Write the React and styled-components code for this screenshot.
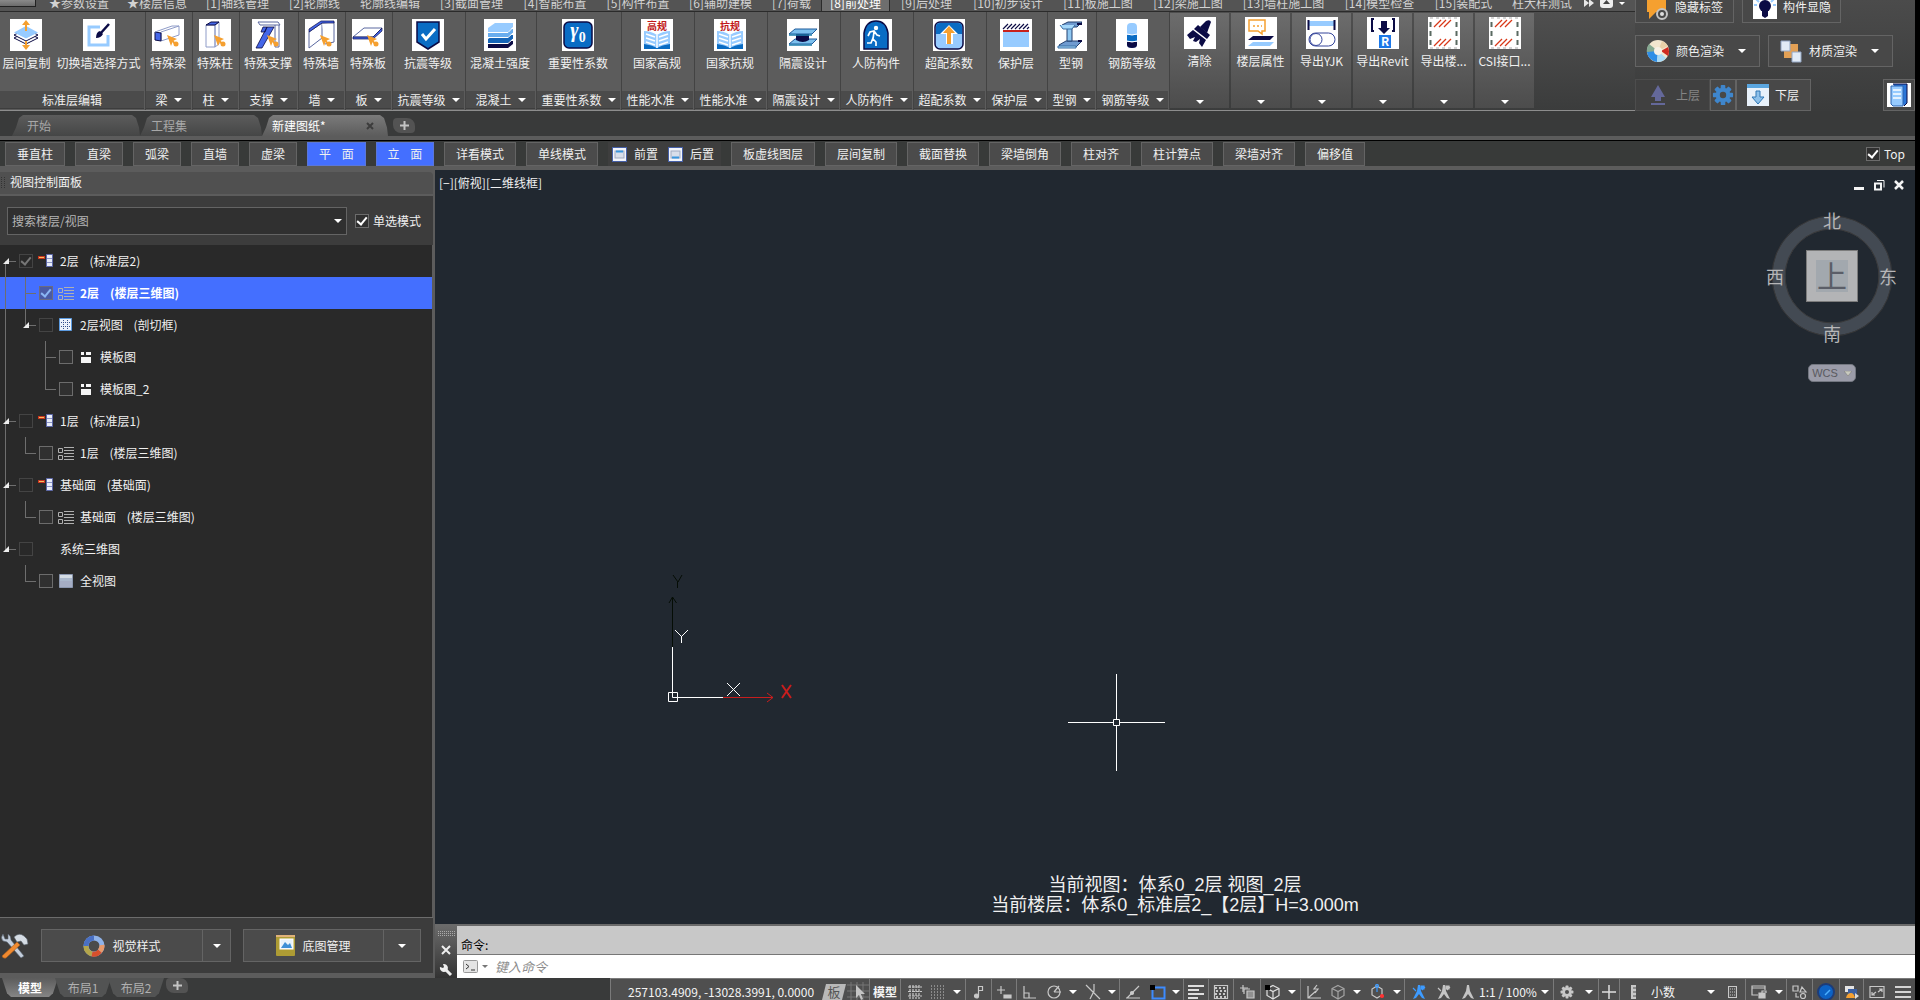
import React from "react";
import styled, { createGlobalStyle, css } from "styled-components";

const GlobalStyle = createGlobalStyle`
  * { box-sizing: border-box; }
  body {
    margin: 0;
    background: #000;
    overflow: hidden;
    color: #f0f0f0;
    font: 12px/16px "Noto Sans CJK SC", sans-serif;
  }
  button, select, input { font: inherit; color: inherit; margin: 0; }
  button { padding: 0; border: 0; background: none; white-space: nowrap; }
  svg { display: block; flex: none; }
`;

/* ---------- shell ---------- */

const Shell = styled.div`
  display: flex;
  flex-direction: column;
  height: 100vh;
  margin-right: 5px;
  background: #5c5c5c;
`;

const TopArea = styled.header`
  display: flex;
  flex: none;
  height: 111px;
`;

const RibbonColumn = styled.div`
  flex: 1;
  min-width: 0;
  display: flex;
  flex-direction: column;
  border-bottom: 1px solid #8d8d8d;
  overflow: hidden;
`;

/* ---------- menu strip ---------- */

const MenuStrip = styled.nav`
  display: flex;
  flex: none;
  align-items: flex-end;
  height: 12px;
  overflow: hidden;
  background: #545454;
  border-bottom: 1px solid #2b2b2b;
`;

const AppCorner = styled.button`
  flex: none;
  align-self: flex-start;
  width: 36px;
  height: 7px;
  margin-right: 4px;
  background: linear-gradient(#8a8a8a, #6c6c6c);
  border-right: 1px solid #222;
  border-bottom: 1px solid #222;
`;

const MenuTab = styled.button`
  flex: none;
  width: ${(p) => p.$w}px;
  height: 16px;
  line-height: 16px;
  text-align: center;
  color: ${(p) => (p.$active ? "#fff" : "#d2d2d2")};
  ${(p) =>
    p.$active &&
    css`
      background: #6e6e6e;
      border-left: 1px solid #2b2b2b;
      border-right: 1px solid #2b2b2b;
    `}
`;

const MenuExtras = styled.div`
  display: flex;
  align-items: center;
  gap: 6px;
  height: 16px;
  margin-left: 2px;
`;

/* ---------- ribbon ---------- */

const Ribbon = styled.div`
  display: flex;
  flex: 1;
  background: linear-gradient(#4f4f4f, #3b3c3c);
`;

const Panel = styled.section`
  flex: none;
  display: flex;
  flex-direction: column;
  width: ${(p) => p.$w}px;
  padding: 7px 0 1px;
  background: #5c5c5c;
  border-right: 1px solid #434343;
`;

const PanelTools = styled.div`
  flex: 1;
  display: flex;
  justify-content: center;
  gap: 6px;
  padding-right: 2px;
`;

const Tool = styled.button`
  display: flex;
  flex-direction: column;
  align-items: center;
  gap: 4px;
  height: 56px;
`;

const PanelTitle = styled.button`
  display: flex;
  align-items: center;
  justify-content: center;
  gap: 6px;
  height: 18px;
  margin-right: 1px;
  background: #4b4b4b;
  border-bottom: 1px solid #3d3d3d;
`;

const Collapsed = styled.button`
  flex: none;
  display: flex;
  flex-direction: column;
  align-items: center;
  gap: 4px;
  width: 59px;
  margin: 1px 2px 2px 0;
  padding: 4px 0 4px;
  background: linear-gradient(#6c6c6c, #4c4c4c);
  overflow: hidden;

  & > svg:last-child { margin-top: auto; }
`;

/* ---------- quick buttons at the right ---------- */

const QuickArea = styled.aside`
  flex: none;
  display: flex;
  flex-direction: column;
  justify-content: flex-end;
  gap: 12px;
  width: 280px;
  overflow: hidden;
  background: linear-gradient(#4b4b4b, #3a3b3b);
`;

const QuickRow = styled.div`
  display: flex;
  flex: none;
  gap: ${(p) => p.$gap || 0}px;
  height: 32px;
`;

const QuickButton = styled.button`
  display: flex;
  align-items: center;
  gap: 6px;
  width: ${(p) => p.$w}px;
  padding: 0 0 0 ${(p) => p.$pad ?? 10}px;
  background: #484848;
  border: 1px solid #646464;
  ${(p) => p.$off && "background: #404040; border-color: #4d4d4d; color: #858585;"}
  ${(p) => p.$last && "margin-left: auto;"}
  & > span { margin-right: 8px; }
`;

/* ---------- document tabs ---------- */

const DocTabs = styled.nav`
  flex: none;
  display: flex;
  align-items: flex-end;
  height: 25px;
  padding-left: 12px;
  background: #393a3a;
`;

const DocTab = styled.button`
  position: relative;
  display: flex;
  align-items: center;
  justify-content: space-between;
  width: ${(p) => p.$w}px;
  height: 21px;
  padding: 0 14px 0 ${(p) => p.$pad}px;
  color: ${(p) => (p.$active ? "#fff" : "#a8a8a8")};
  background: ${(p) => (p.$active ? "linear-gradient(#7b7b7b, #5c5c5c)" : "linear-gradient(#5c5c5c, #454646)")};
  clip-path: polygon(0 100%, 4px 60%, 7px 3px, 11px 0, calc(100% - 8px) 0, calc(100% - 4px) 3px, calc(100% - 1px) 60%, 100% 100%);
`;

const AddTab = styled.button`
  display: grid;
  place-items: center;
  width: 22px;
  height: 15px;
  margin: 0 0 3px 5px;
  background: #535353;
  border-radius: 4px 8px 4px 8px;
`;

/* ---------- command toolbar ---------- */

const Toolbar = styled.div`
  flex: none;
  display: flex;
  align-items: stretch;
  gap: 10px;
  height: 30px;
  margin-top: 4px;
  padding: 1px 10px 0 5px;
  background: #383a39;
  border-top: 1px solid #000;
  border-bottom: 4px solid #5c5c5c;
`;

const ToolbarButton = styled.button`
  flex: none;
  width: ${(p) => p.$w}px;
  background: ${(p) => (p.$on ? "#446fff" : "#4b4b4b")};
  border: 1px solid ${(p) => (p.$on ? "#5b77d8" : "#646464")};
  white-space: pre;
`;

const OrderGroup = styled.div`
  display: flex;
  align-items: center;
  gap: 10px;
  width: 113px;
  padding-left: 4px;
  background: #3e3e3e;
`;

const OrderButton = styled.button`
  display: flex;
  align-items: center;
  gap: 7px;
`;

const CheckLabel = styled.label`
  display: flex;
  align-items: center;
  gap: 4px;
  ${(p) => p.$push && "margin-left: auto;"}
`;

const Check = styled.input.attrs({ type: "checkbox" })`
  appearance: none;
  flex: none;
  display: grid;
  place-items: center;
  width: 14px;
  height: 14px;
  color: ${(p) => (p.$tone === "blue" ? "#8ab6f5" : p.$tone === "dim" ? "#777" : "#fff")};
  border: 1px solid ${(p) => (p.$tone === "blue" ? "#6b6b80" : p.$tone === "dim" ? "#444" : "#6c6c6c")};
  background: ${(p) => (p.$tone === "blue" ? "#4a5aa5" : p.$tone === "dim" ? "#292929" : "#303030")};

  &:checked::after {
    content: "";
    width: 4px;
    height: 8px;
    margin-top: -2px;
    border: solid currentColor;
    border-width: 0 2px 2px 0;
    transform: rotate(40deg);
  }
`;

/* ---------- body ---------- */

const Body = styled.main`
  flex: 1;
  min-height: 0;
  display: flex;
`;

const Side = styled.aside`
  flex: none;
  display: flex;
  flex-direction: column;
  width: 435px;
  padding: 2px 2px 5px 0;
`;

const SideHeader = styled.h2`
  display: flex;
  align-items: center;
  gap: 5px;
  height: 24px;
  margin: 0;
  padding: 0 0 2px 1px;
  font: inherit;
  background: #505050;
  border-bottom: 2px solid #5c5c5c;
  border-radius: 0 4px 0 0;
`;

const SearchRow = styled.div`
  display: flex;
  align-items: center;
  gap: 8px;
  height: 49px;
  padding: 0 12px 0 7px;
  background: #3c3c3c;
`;

const SelectBox = styled.div`
  position: relative;
  flex: ${(p) => (p.$w ? "none" : 1)};
  ${(p) => p.$w && `width: ${p.$w}px;`}
  height: ${(p) => p.$h}px;

  select {
    appearance: none;
    width: 100%;
    height: 100%;
    padding: 0 4px;
    border: ${(p) => (p.$w ? "0" : "1px solid #646464")};
    border-radius: 0;
    background: ${(p) => (p.$w ? "transparent" : "#303030")};
    color: ${(p) => (p.$w ? "#f4f4f4" : "#b4b4b4")};
  }
  svg {
    position: absolute;
    right: 5px;
    top: calc(50% - 2px);
  }
`;

const Tree = styled.ul`
  flex: 1;
  min-height: 0;
  margin: 0 1px 0 0;
  padding: 0;
  list-style: none;
  background: #292929;
`;

const TreeRow = styled.li`
  display: flex;
  align-items: center;
  height: 32px;
  white-space: pre;
  ${(p) => p.$selected && "background: #446fff; color: #fff; font-weight: 700;"}
`;

const Guide = styled.span`
  position: relative;
  flex: none;
  width: ${(p) => (p.$stub ? 19 : 20)}px;
  height: 32px;

  &::before {
    content: "";
    position: absolute;
    left: 5px;
    width: 1px;
    background: #6e6e6e;
    top: ${(p) => (p.$line === "start" ? 16 : 0)}px;
    height: ${(p) => ({ full: 32, start: 16, end: 16 })[p.$line] || 0}px;
  }
  &::after {
    content: "";
    position: absolute;
    left: 5px;
    top: 16px;
    width: ${(p) => (p.$stub ? 11 : 0)}px;
    height: 1px;
    background: #6e6e6e;
  }
  svg {
    position: absolute;
    left: 3px;
    top: 13px;
    z-index: 1;
  }
`;

const TreeIcon = styled.span`
  flex: none;
  display: grid;
  place-items: center start;
  width: 17px;
  margin: 0 5px;
`;

const SideFooter = styled.div`
  display: flex;
  align-items: center;
  gap: 12px;
  height: 56px;
  background: #3c3c3c;
  border-top: 1px solid #6c6c6c;
`;

const SplitButton = styled.div`
  display: flex;
  width: ${(p) => p.$w}px;
  height: 33px;
  background: #4b4b4b;
  border: 1px solid #646464;

  button {
    display: flex;
    align-items: center;
    justify-content: center;
    gap: 7px;
  }
  button:first-child { flex: 1; }
  button:last-child {
    width: ${(p) => p.$arrow}px;
    border-left: 1px solid #646464;
  }
`;

/* ---------- drawing area ---------- */

const Work = styled.div`
  flex: 1;
  min-width: 0;
  display: flex;
  flex-direction: column;
`;

const Canvas = styled.section`
  position: relative;
  flex: 1;
  min-height: 0;
  background: #212830;
  overflow: hidden;
`;

const ViewLabel = styled.div`
  position: absolute;
  left: 4px;
  top: 5px;
`;

const WindowButtons = styled.div`
  position: absolute;
  right: 10px;
  top: 9px;
  display: flex;
  gap: 8px;
`;

const Compass = styled.div`
  position: absolute;
  right: 17px;
  top: 40px;
  display: flex;
  flex-direction: column;
  align-items: center;
  gap: 20px;
`;

const WcsButton = styled.button`
  display: flex;
  align-items: center;
  justify-content: center;
  gap: 6px;
  width: 48px;
  height: 18px;
  border: 1px solid #737780;
  border-radius: 5px;
  background: #9b9ca9;
  color: #5a5a60;
  font: 11px/16px "Liberation Sans", sans-serif;
`;

const Drawing = styled.svg`
  position: absolute;
  left: ${(p) => p.$x}px;
  top: ${(p) => p.$y}px;
`;

const Caption = styled.p`
  position: absolute;
  left: 0;
  right: 0;
  bottom: 9px;
  margin: 0;
  text-align: center;
  font: 18px/20px "Liberation Sans", "Noto Sans CJK SC", sans-serif;
`;

const CommandDock = styled.section`
  flex: none;
  display: flex;
  height: 54px;
  border-top: 2px solid #6a6a6a;
`;

const DockHandle = styled.div`
  display: flex;
  flex-direction: column;
  align-items: center;
  justify-content: space-between;
  width: 22px;
  padding: 5px 0 1px;
  background: linear-gradient(#6a6a6a, #333);
`;

const DockBody = styled.div`
  flex: 1;
  display: flex;
  flex-direction: column;
  background: #fff;
`;

const History = styled.div`
  height: 29px;
  padding: 10px 0 0 4px;
  background: #c8c8c8;
  border-bottom: 1px solid #777;
  color: #000;
  line-height: 18px;
`;

const Prompt = styled.div`
  flex: 1;
  display: flex;
  align-items: center;
  gap: 4px;
  padding-left: 6px;

  input {
    flex: 1;
    height: 18px;
    margin-left: 3px;
    padding: 0;
    border: 0;
    outline: 0;
    background: none;
  }
  input::placeholder {
    color: #8c8c8c;
    font-style: italic;
    font-size: 13px;
    opacity: 1;
  }
`;

/* ---------- bottom line ---------- */

const BottomLine = styled.footer`
  flex: none;
  display: flex;
  justify-content: space-between;
  height: 22px;
  overflow: hidden;
  background: #393a3a;
`;

const LayoutTabs = styled.nav`
  display: flex;
  padding-left: 2px;
`;

const LayoutTab = styled.button`
  width: 56px;
  height: 19px;
  margin-right: -3px;
  color: ${(p) => (p.$active ? "#fff" : "#b0b0b0")};
  font-weight: ${(p) => (p.$active ? 700 : 400)};
  background: ${(p) => (p.$active ? "linear-gradient(#5c5c5c, #858585)" : "#525353")};
  clip-path: polygon(0 0, 100% 0, calc(100% - 5px) 80%, calc(100% - 9px) 100%, 9px 100%, 5px 80%);
`;

const Status = styled.div`
  display: flex;
  height: 26px;
  background: #4f4f4f;
  border-top: 1px solid #7a7a7a;
  border-left: 1px solid #7a7a7a;
`;

const Cell = styled.button`
  flex: none;
  display: flex;
  align-items: center;
  justify-content: ${(p) => (p.$start ? "flex-start" : "center")};
  width: ${(p) => p.$w}px;
  padding-left: ${(p) => p.$start || 0}px;
  color: #f4f4f4;
  font-weight: ${(p) => (p.$bold ? 700 : 400)};
  border-right: ${(p) => (p.$edge ? "1px solid #7a7a7a" : "0")};
`;

/* ---------- drawings ---------- */

const N = "#0b0b45";
const B = "#0a6cc4";
const L = "#97cbff";
const O = "#f5a030";
const V = "#4466e8";

const Caret = ({ w = 8, c = "#fff" }) => (
  <svg width={w} height={w / 2} viewBox="0 0 8 4"><path d="M0 0h8L4 4z" fill={c} /></svg>
);

const Pointer = () => (
  <g fill={O}><path d="M15 16l10 4-4 2-2 5z" /><path d="M20 21l3 4" stroke={O} strokeWidth="2" /><circle cx="24" cy="25" r="2.5" /></g>
);

const Book = ({ text }) => (
  <>
    <text x="16" y="11" textAnchor="middle" fontSize="10" fontWeight="700" fill="#c21a1a">{text}</text>
    <path d="M3 12q7 0 13 4q6-4 13-4v15q-7 0-13 3q-6-3-13-3z" fill={L} />
    <path d="M3 25q8 1 13 4q5-3 13-4v5H3z" fill={B} />
    <path d="M16 16v13M5 15l9 3M5 19l9 3M5 23l9 3M27 15l-9 3M27 19l-9 3M27 23l-9 3" stroke="#fff" strokeWidth="1.4" fill="none" />
  </>
);

const Hatch = () => (
  <g fill="none">
    <path d="M6 10l7-7M11 10l7-7M16 10l7-7M6 29l7-7M11 29l7-7M16 29l7-7" stroke="#d83818" strokeWidth="1.3" />
    <path d="M2.5 5v24M28.500 5v24" stroke="#5a6a62" strokeWidth="2" strokeDasharray="5 4" />
    <path d="M2 1h28M2 31h28" stroke="#aaa" strokeDasharray="3 3" />
  </g>
);

const ART = {
  copy: (
    <>
      <path d="M16 13l12 6-12 6-12-6z" fill="#fff" stroke={N} />
      <path d="M16 10l12 6-12 6-12-6z" fill="#fff" stroke={N} />
      <path d="M16 7l12 6.500-12 6-12-6z" fill={L} />
      <path d="M16 1l4 5h-3v6h-2V6h-3zM16 31l4-5h-3v-4h-2v4h-3z" fill={O} />
    </>
  ),
  wall: (
    <>
      <path d="M17 8H6v18h19V16" fill="none" stroke={L} strokeWidth="3" />
      <path d="M26 5l-9 10" stroke={N} strokeWidth="2.500" />
      <path d="M17 12l3 3q-2 4-7 4q0-6 4-7z" fill={N} />
    </>
  ),
  beam: (
    <>
      <path d="M9 13l18-6v9L9 22z" fill="#fff" stroke="#8f9cc8" />
      <path d="M3 13l6 1v8l-6-1z" fill={V} stroke={N} />
      <path d="M3 13l17-6h7" fill="none" stroke="#8f9cc8" />
      <Pointer />
    </>
  ),
  column: (
    <>
      <path d="M7 6v22h9V6zM16 6l4-3v22l-4 3z" fill="#fff" stroke="#8f9cc8" />
      <path d="M7 6l5-3h8l-4 3z" fill={V} stroke={N} />
      <Pointer />
    </>
  ),
  brace: (
    <>
      <path d="M6 3h20l2 3H8zM23 6v22M27 6v22M23 28h4" fill="#fff" stroke="#5a68a0" />
      <path d="M15 8h7L10 29H4zM11 8h4l-2 5h-4z" fill={V} stroke={N} strokeWidth=".8" />
      <Pointer />
    </>
  ),
  wallBox: (
    <>
      <path d="M4 13L17 4v15L4 29z" fill="#fff" stroke="#5a68a0" />
      <path d="M17 4l12-1v20l-9 2" fill="#fff" stroke="#5a68a0" />
      <path d="M4 13v-3L16 2h13v2H17z" fill={V} stroke={N} strokeWidth=".7" />
      <Pointer />
    </>
  ),
  slab: (
    <>
      <path d="M1 18L12 9h18l-9 9z" fill="#fff" stroke="#5a68a0" />
      <path d="M1 18h20l9-9v3l-9 8H1z" fill={V} stroke={N} strokeWidth=".7" />
      <Pointer />
    </>
  ),
  shield: (
    <>
      <path d="M5 3h22v20l-11 7-11-7z" fill={B} stroke={N} strokeWidth="1.500" />
      <path d="M10 15l4 5 9-10" stroke="#fff" strokeWidth="3" fill="none" />
    </>
  ),
  concrete: (
    <>
      <path d="M4 25l6-3h19v3l-5 4H4z" fill={N} />
      <path d="M4 20l6-4h19v4l-5 4H4z" fill="#1565b8" />
      <path d="M4 14l6-4h19v4l-5 4H4z" fill="#69adee" />
      <path d="M4 9l7-5h18v4l-5 5H4z" fill={L} />
      <path d="M4 13.500h20l5-5M4 18.500h20l5-4.500M4 24.500h20l5-4.500" stroke="#fff" fill="none" />
    </>
  ),
  gamma: (
    <>
      <rect x="2" y="3" width="28" height="26" rx="5" fill={B} stroke={N} strokeWidth="1.500" />
      <text x="16" y="18" textAnchor="middle" fontFamily="Liberation Serif, serif" fontSize="20" fontWeight="700" fontStyle="italic" fill="#fff">γ<tspan fontSize="14" fontStyle="normal" dy="5">0</tspan></text>
    </>
  ),
  bookHigh: <Book text="高规" />,
  bookQuake: <Book text="抗规" />,
  isolate: (
    <>
      <path d="M2 15l6-5h22l-5 5zM2 25l6-5h22l-5 5z" fill="#7cc0ee" stroke="#1e5a9a" />
      <path d="M9 15h13v6q-6 4-13 0z" fill={N} />
      <path d="M2 16h23M2 26h23" stroke="#1e7fae" strokeWidth="1.500" />
    </>
  ),
  runner: (
    <>
      <path d="M4 30V14Q6 2 16 2t12 12v16z" fill={B} stroke={N} strokeWidth="1.500" />
      <circle cx="16" cy="9" r="2.200" fill="#fff" />
      <path d="M8 17l2-4 4-1 3 4 3 1M14 13l-1 7 3 3v4M13 19l-2 5H7" stroke="#fff" strokeWidth="1.700" fill="none" />
    </>
  ),
  over: (
    <>
      <rect x="2" y="3" width="28" height="27" rx="5" fill={L} stroke={N} strokeWidth="1.500" />
      <path d="M3 15V8q0-4 4-4h18q4 0 4 4v7z" fill={B} />
      <path d="M16 6l9 9h-5v10h-7V15H7z" fill="#fff" />
      <path d="M16 7l6 7h-4v11h-4V14h-4z" fill={O} />
    </>
  ),
  cover: (
    <>
      <path d="M3 13h26v15H3z" fill={L} />
      <path d="M3 11h26v2H3z" fill="#c8201c" />
      <path d="M3 10l5-5M7 10l5-5M11 10l5-5M15 10l5-5M19 10l5-5M23 10l5-5M27 10l2-2" stroke={N} strokeWidth="1.200" />
    </>
  ),
  steel: (
    <>
      <path d="M7 6l6-3h14l-5 5H9zM4 26l7-4h16l-6 6H6z" fill="#6f9bd0" stroke="#24406e" />
      <path d="M12 8l5-1v15h-5z" fill="#8fc8f2" stroke="#24406e" />
      <path d="M5 6l3 4h9l3-4M3 27h18v2H3z" fill="#a5d8fa" stroke="#3b6ea4" />
      <path d="M22 5h5M23 22h4" stroke={N} strokeWidth="2" />
    </>
  ),
  rebar: (
    <>
      <rect x="11" y="4" width="10" height="25" rx="4" fill={L} />
      <path d="M11 16h10v6H11z" fill={B} />
      <path d="M11 23h10v3q0 3-5 3t-5-3z" fill={N} />
      <path d="M11 15q5 2 10 0M11 22q5 2 10 0" stroke="#fff" fill="none" />
    </>
  ),
  clear: (
    <>
      <path d="M16 10l6-6q4-2 5 1l-4 11z" fill={N} />
      <path d="M14 8l12 10-3 4L10 12z" fill={N} />
      <path d="M9 13l13 10-4 7-3-4 1-4-4 3-3-1 2-4-5 2-3-4z" fill={N} />
    </>
  ),
  floor: (
    <>
      <path d="M4 3h16v11h-3v3l-4-3H4z" fill="#fff" stroke={O} strokeWidth="1.500" />
      <path d="M8 9h2M12 9h2M16 9h1" stroke={O} strokeWidth="1.500" />
      <path d="M8 19h21l-4 4H3z" fill={N} />
      <path d="M8 25h21l-4 4H3z" fill={L} />
    </>
  ),
  yjk: (
    <>
      <path d="M3 4h26v5H3z" fill={L} />
      <path d="M2.500 3v10M28.500 3v10" stroke={N} strokeWidth="2" />
      <rect x="3" y="16" width="26" height="13" rx="6.500" fill="#fff" stroke="#34449a" />
      <circle cx="10" cy="22.500" r="6" fill="#fff" stroke="#34449a" />
    </>
  ),
  revit: (
    <>
      <path d="M7 2H5v12h2M25 2h2v12h-2" fill="none" stroke={N} strokeWidth="2" />
      <path d="M14 4h6v7h3l-6 6-6-6h3z" fill={N} />
      <path d="M12 18h12v13H12z" fill="#1c78e8" />
      <text x="18" y="29" textAnchor="middle" fontSize="12" fontWeight="700" fill="#fff">R</text>
    </>
  ),
  hatch: <Hatch />,
};

const Art = ({ name }) => (
  <svg width="32" height="32" viewBox="0 0 32 32">
    <rect width="32" height="32" fill="#fff" />
    {ART[name]}
  </svg>
);

const GearShape = ({ size, fill, hole }) => (
  <svg width={size} height={size} viewBox="0 0 24 24">
    <g fill={fill}>
      {[0, 45, 90, 135].map((a) => (
        <rect key={a} x="9.500" y="1" width="5" height="22" rx="1" transform={`rotate(${a} 12 12)`} />
      ))}
      <circle cx="12" cy="12" r="8" />
    </g>
    <circle cx="12" cy="12" r="3.500" fill={hole} />
  </svg>
);

const ColorBall = () => (
  <svg width="24" height="24" viewBox="0 0 24 24">
    <circle cx="12" cy="12" r="11" fill="#f2e6cf" />
    <path d="M12 12L3 5a11 11 0 0 0-2 9z" fill="#85a992" />
    <path d="M12 12L1 13a11 11 0 0 0 10 10z" fill="#2f8ee6" />
    <path d="M12 12l-1 11a11 11 0 0 0 9-4z" fill="#a6daf8" />
    <path d="M15 12l7 5a11 11 0 0 0 0-9z" fill="#cf2a20" />
    <path d="M12 12l10-5a11 11 0 0 0-6-5z" fill="#e8d0a8" />
    <circle cx="12" cy="12" r="4" fill="#f7f1e6" />
  </svg>
);

const Ring = () => (
  <svg width="22" height="22" viewBox="0 0 22 22" fill="none" strokeWidth="5">
    <circle cx="11" cy="11" r="8" stroke="#8fb2e8" />
    <path d="M11 3a8 8 0 0 0-8 8" stroke="#4a70c4" />
    <path d="M3 11a8 8 0 0 0 6 8" stroke="#b4a64c" />
    <path d="M9 19a8 8 0 0 0 8-3" stroke="#d8502c" />
    <path d="M17 16a8 8 0 0 0 2-6" stroke="#ea9a6a" />
  </svg>
);

const Tools = () => (
  <svg width="29" height="28" viewBox="0 0 29 28">
    <path d="M3 2q-3 4 0 7l4 1 14 16 3-2L11 8q0-4-3-6v5L5 7z" fill="#c3cedc" stroke="#56606c" strokeWidth=".6" />
    <path d="M14 5q5-5 10-1l3 3 1 5-4 1-3-4-4 1z" fill="#d5dce4" stroke="#5c6670" strokeWidth=".6" />
    <path d="M17 10l3 3L6 26q-3 1-4-2z" fill="#f08a30" stroke="#a85a18" strokeWidth=".6" />
  </svg>
);

const Album = () => (
  <svg width="19" height="21" viewBox="0 0 19 21">
    <rect width="19" height="21" rx="1" fill="#ae9c34" />
    <path d="M0 1h19" stroke="#e0b27a" strokeWidth="2" />
    <rect x="4" y="4" width="13" height="10" fill="#e8f2fa" stroke="#fff" />
    <path d="M5 13l4-6 3 3 2-2 2 5z" fill="#3d8fd6" />
  </svg>
);

const OrderIcon = ({ low }) => (
  <svg width="15" height="15" viewBox="0 0 15 15">
    <rect x=".5" y=".5" width="14" height="14" fill="#f2f5fc" stroke="#4660a8" />
    <rect x="3" y="4" width="9" height="7" fill="#d8deea" stroke="#a0aac0" />
    <path d={low ? "M4 10.500h7" : "M4 4.500h7"} stroke="#3a96de" strokeWidth="2" />
  </svg>
);

const TREE_ART = {
  storey: <svg width="16" height="14" viewBox="0 0 16 14"><path d="M0 2h7v3H0z" fill="#c9341f" /><path d="M1 3h5v1H1z" fill="#f4c060" /><path d="M8.500.5h6v12h-6z" fill="#e9edf8" stroke="#5d68a8" /><path d="M9 4.500h5M9 8.500h5" stroke="#8b94c4" /></svg>,
  list: <svg width="16" height="13" viewBox="0 0 16 13" stroke="#b0b0b0" fill="none"><path d="M.5 1.500h4v4h-4zM.5 8.500h4v4h-4zM6 .5h10M6 3.500h10M6 6.500h10M6 9.500h10M6 12.500h10" /></svg>,
  grid: <svg width="14" height="14" viewBox="0 0 14 14"><path d="M1.500.500h12v12h-12z" fill="#eaf2fb" stroke="#5b9ae0" /><path d="M3 4.500h9M3 8.500h9M5.500 2v9M9.500 2v9" stroke="#35528c" strokeDasharray="1 1" /></svg>,
  plan: <svg width="13" height="11" viewBox="0 0 13 11"><path d="M3 0h3v3H3zM8 0h5v3H8zM3 5h10v6H3z" fill="#f5f5f5" /></svg>,
  cube: <svg width="15" height="14" viewBox="0 0 15 14"><path d="M1.500.500h13v13h-13z" fill="#aab8cc" stroke="#8a96ae" /><path d="M2 1h12v3H2z" fill="#d4dce4" /><path d="M2 7h12v6H2z" fill="#a5adc4" /></svg>,
};

const S = ({ children, w = 16, fill = "none", stroke = "#c8c8c8" }) => (
  <svg width={w} height="16" viewBox={`0 0 ${w} 16`} fill={fill} stroke={stroke} strokeWidth="1.200">{children}</svg>
);

const Box3d = ({ stroke }) => (
  <S stroke={stroke}><path d="M8 1.500l6 3v7l-6 3.500-6-3.500v-7zM2 4.500l6 3 6-3M8 7.500V15" /></S>
);
const Person = ({ c, dots }) => (
  <S stroke="none" fill={c}>
    <path d="M7 1h2l1 6 4 8-3-1-3-4-3 4-3 1 4-8z" />
    {dots && <path d="M10 2h3v3h-3zM2 4l3 3M11 6l3-3" stroke={c} />}
  </S>
);

const caret = (w, edge) => ({ w, edge, art: <Caret w={8} /> });

const STATUS = [
  { w: 25, art: <svg width="24" height="18" viewBox="0 0 24 18"><path d="M4 1h20l-4 16H0z" fill="#b8b8b8" /><text x="12" y="14" textAnchor="middle" fontSize="13" fill="#555">板</text></svg> },
  { w: 24, edge: true, art: <svg width="22" height="20" viewBox="0 0 22 20"><path d="M0 3h22M0 9h22M0 15h22M4 0v20M10 0v20M16 0v20" stroke="#777" /><path d="M9 3l9 9h-4l2 5-2 1-2-5-3 3z" fill="#c4c4c4" /></svg> },
  { w: 31, edge: true, text: "模型" },
  { w: 27, art: <S><path d="M1 3h14M1 7.500h14M1 12h14M3 1v14M6 1v14M9 1v14M12 1v14" strokeDasharray="3 1" /></S> },
  { w: 20, art: <S><path d="M1 2h14M1 5h14M1 8h14M1 11h14M1 14h14" strokeDasharray="1 2" /></S> },
  caret(18, true),
  { w: 26, edge: true, art: <S><path d="M7.500 12V2.500h4v4h-4" /><circle cx="5.500" cy="12" r="2" fill="#c8c8c8" /></S> },
  { w: 25, edge: true, art: <S><path d="M1 6h8M5 2v8" /><path d="M8 11h7v3H8z" fill="#c8c8c8" /></S> },
  { w: 26, art: <S><path d="M2 2v12h12M2 9h5v5" /></S> },
  { w: 22, art: <S><circle cx="8" cy="8" r="6" /><path d="M8 8l5-6M8 8h7" /></S> },
  caret(16),
  { w: 24, art: <S><path d="M1 1l14 14M9 0v7l-4 8" /></S> },
  caret(15, true),
  { w: 26, art: <S><path d="M1 14h14M2 14L14 2" /><circle cx="7" cy="9" r="1.500" fill="#ccc" /></S> },
  { w: 23, art: <S stroke="#3d8bff"><path d="M2.500 3.500h12v11h-12z" strokeWidth="2" /><path d="M0 1h5v5H0z" fill="#000" stroke="none" /></S> },
  caret(15, true),
  { w: 25, edge: true, art: <S stroke="#dedede"><path d="M0 2h16M0 6h11M0 10h16M0 14h10" strokeWidth="2" /></S> },
  { w: 25, edge: true, art: <S><path d="M1.500 1.500h13v13h-13z" /><path d="M2 4h12M3 7h12M2 10h12M3 13h12" strokeWidth="2" strokeDasharray="2 2" /></S> },
  { w: 27, edge: true, art: <S><path d="M1 4h8M4 1v7" /><path d="M8 7h7v7H8z" fill="#909090" /><path d="M5 10V5h6" /></S> },
  { w: 23, art: <S stroke="#e0e0e0"><path d="M8 1.500l6 3v7l-6 3.500-6-3.500v-7zM2 4.500l6 3 6-3M8 7.500V15" /><path d="M0 1h5v5H0z" fill="#000" stroke="none" /></S> },
  caret(17, true),
  { w: 25, art: <S><path d="M2 2v12h13M2 14l8-7M11 1l-3 4h4l-3 4" /></S> },
  { w: 24, art: <Box3d stroke="#a4a4a4" /> },
  caret(14),
  { w: 25, art: <S><path d="M8 2l5 3v6l-5 3-5-3V5z" /><path d="M8 2v6" stroke="#3d9bff" /><circle cx="8" cy="2" r="1.500" stroke="#3d9bff" /><circle cx="13" cy="12" r="1.500" fill="#f33" stroke="#f33" /></S> },
  caret(16, true),
  { w: 27, art: <Person c="#3d9bff" dots /> },
  { w: 24, art: <Person c="#c4c4c4" dots /> },
  { w: 23, art: <Person c="#c4c4c4" /> },
  { w: 58, text: "1:1 / 100%" },
  caret(17, true),
  { w: 25, art: <GearShape size={14} fill="#c8c8c8" hole="#505050" /> },
  caret(20, true),
  { w: 21, edge: true, art: <S stroke="#e0e0e0"><path d="M1 8h14M8 1v14" strokeWidth="1.500" /></S> },
  { w: 27, art: <S w={5} stroke="none" fill="#c8c8c8"><path d="M0 1h5v14H0z" /><path d="M2 4h3M2 8h3M2 12h3" stroke="#505050" /></S> },
  { w: 73, edge: true, select: "小数" },
  { w: 26, edge: true, art: <S w={9}><path d="M.5 2.500h8v11h-8z" /><path d="M2 5h6M2 8h6M2 11h6" strokeDasharray="1 1" /></S> },
  { w: 25, art: <S><path d="M7 11H1V2h13v4M1 4h13" /><path d="M8 9h6v5H8z" fill="#c8c8c8" /><path d="M11 9V7h4v2" /></S> },
  caret(16, true),
  { w: 26, edge: true, art: <S><path d="M1 2h5v5H1zM10 3l4 5H8z" /><circle cx="11" cy="12" r="2.500" /><path d="M4 9v4h3" /></S> },
  { w: 27, edge: true, art: <svg width="18" height="18" viewBox="0 0 18 18"><circle cx="9" cy="9" r="8" fill="#0c62c4" stroke="#1d3c78" strokeWidth="2" /><path d="M8 12l5-5" stroke="#4ab0ff" strokeWidth="1.500" /></svg> },
  { w: 24, edge: true, art: <S stroke="none"><path d="M1 2h9v6H1z" fill="#e4e4e4" /><path d="M4 5h9v6H4z" fill="#3b5fa0" /><path d="M2 14q1-5 5-5 3 0 4 5z" fill={O} /><path d="M11 9l4 3-4 3z" fill="#ddd" /></S> },
  { w: 26, art: <S><path d="M1 2.500h14v11H1zM3 11l4-3M3 8v3h3M13 5l-4 3M13 8V5h-3" /></S> },
  { w: 25, art: <S stroke="#d4d4d4"><path d="M0 3h16M0 8h16M0 13h16" strokeWidth="2" /></S> },
];

/* ---------- data ---------- */

const MENUS = [
  ["★参数设置", 78], ["★楼层信息", 78], ["[1]轴线管理", 83], ["[2]轮廓线", 71], ["轮廓线编辑", 80],
  ["[3]截面管理", 83], ["[4]智能布置", 84], ["[5]构件布置", 82], ["[6]辅助建模", 83], ["[7]荷载", 59],
  ["[8]前处理", 69], ["[9]后处理", 73], ["[10]初步设计", 90], ["[11]板施工图", 90], ["[12]梁施工图", 90],
  ["[13]墙柱施工图", 101], ["[14]模型检查", 91], ["[15]装配式", 77], ["柱大样测试", 80],
];

const PANELS = [
  { w: 146, title: "标准层编辑", plain: true, tools: [["copy", "层间复制"], ["wall", "切换墙选择方式"]] },
  { w: 47, title: "梁", tools: [["beam", "特殊梁"]] },
  { w: 47, title: "柱", tools: [["column", "特殊柱"]] },
  { w: 59, title: "支撑", tools: [["brace", "特殊支撑"]] },
  { w: 47, title: "墙", tools: [["wallBox", "特殊墙"]] },
  { w: 47, title: "板", tools: [["slab", "特殊板"]] },
  { w: 73, title: "抗震等级", tools: [["shield", "抗震等级"]] },
  { w: 71, title: "混凝土", tools: [["concrete", "混凝土强度"]] },
  { w: 85, title: "重要性系数", tools: [["gamma", "重要性系数"]] },
  { w: 73, title: "性能水准", tools: [["bookHigh", "国家高规"]] },
  { w: 73, title: "性能水准", tools: [["bookQuake", "国家抗规"]] },
  { w: 73, title: "隔震设计", tools: [["isolate", "隔震设计"]] },
  { w: 73, title: "人防构件", tools: [["runner", "人防构件"]] },
  { w: 73, title: "超配系数", tools: [["over", "超配系数"]] },
  { w: 61, title: "保护层", tools: [["cover", "保护层"]] },
  { w: 49, title: "型钢", tools: [["steel", "型钢"]] },
  { w: 73, title: "钢筋等级", tools: [["rebar", "钢筋等级"]] },
];

const COLLAPSED = [
  ["clear", "清除"], ["floor", "楼层属性"], ["yjk", "导出YJK"],
  ["revit", "导出Revit"], ["hatch", "导出楼..."], ["hatch", "CSI接口..."],
];

const LEFT_BUTTONS = [
  ["垂直柱", 60], ["直梁", 48], ["弧梁", 48], ["直墙", 48], ["虚梁", 48],
  ["平    面", 59, true], ["立    面", 58, true], ["详看模式", 72], ["单线模式", 72],
];
const RIGHT_BUTTONS = [
  ["板虚线图层", 84], ["层间复制", 72], ["截面替换", 72], ["梁墙倒角", 72],
  ["柱对齐", 60], ["柱计算点", 72], ["梁墙对齐", 72], ["偏移值", 60],
];

const TREE = [
  { guides: ["start"], open: true, art: "storey", text: "2层    (标准层2)", tone: "dim", checked: true },
  { guides: ["full", "full"], art: "list", text: "2层    (楼层三维图)", tone: "blue", checked: true, selected: true },
  { guides: ["full", "end"], open: true, art: "grid", text: "2层视图    (剖切框)", tone: "dim" },
  { guides: ["full", "", "full"], art: "plan", text: "模板图" },
  { guides: ["full", "", "end"], art: "plan", text: "模板图_2" },
  { guides: ["full"], open: true, art: "storey", text: "1层    (标准层1)", tone: "dim" },
  { guides: ["full", "end"], art: "list", text: "1层    (楼层三维图)" },
  { guides: ["full"], open: true, art: "storey", text: "基础面    (基础面)", tone: "dim" },
  { guides: ["full", "end"], art: "list", text: "基础面    (楼层三维图)" },
  { guides: ["end"], open: true, text: "系统三维图", tone: "dim" },
  { guides: ["", "end"], art: "cube", text: "全视图" },
];

/* ---------- parts ---------- */

const Plus = () => (
  <svg width="9" height="9" viewBox="0 0 9 9" stroke="#c4c4c4" strokeWidth="2"><path d="M4.500 0v9M0 4.500h9" /></svg>
);

const Header = () => (
  <TopArea>
    <RibbonColumn>
      <MenuStrip>
        <AppCorner aria-label="应用程序" />
        {MENUS.map(([text, w]) => (
          <MenuTab key={text} $w={w} $active={text.startsWith("[8]")}>{text}</MenuTab>
        ))}
        <MenuExtras>
          <svg width="10" height="8" viewBox="0 0 10 8" fill="#e8e8e8"><path d="M0 0l5 4-5 4zM5 0l5 4-5 4z" /></svg>
          <svg width="13" height="10" viewBox="0 0 13 10"><rect width="13" height="10" rx="3" fill="#eee" /><path d="M3 6l3.500-4L10 6z" fill="#444" /></svg>
          <Caret w={6} />
        </MenuExtras>
      </MenuStrip>
      <Ribbon>
        {PANELS.map((p, i) => (
          <Panel key={i} $w={p.w}>
            <PanelTools>
              {p.tools.map(([art, text]) => (
                <Tool key={text}><Art name={art} />{text}</Tool>
              ))}
            </PanelTools>
            <PanelTitle>{p.title}{!p.plain && <Caret />}</PanelTitle>
          </Panel>
        ))}
        {COLLAPSED.map(([art, text]) => (
          <Collapsed key={text}><Art name={art} />{text}<Caret /></Collapsed>
        ))}
      </Ribbon>
    </RibbonColumn>
    <QuickArea>
      <QuickRow $gap={8}>
        <QuickButton $w={99}>
          <svg width="23" height="26" viewBox="0 0 23 26"><path d="M1 0h19v18H10l-7 7v-7H1z" fill={O} /><circle cx="16" cy="20" r="5" fill="#484848" stroke="#c4c4c4" strokeWidth="2" /><circle cx="16" cy="20" r="2" fill="#ddd" /></svg>
          隐藏标签
        </QuickButton>
        <QuickButton $w={99}>
          <svg width="24" height="24" viewBox="0 0 24 24"><path d="M0 0h24v24H0z" fill="#fff" /><circle cx="12" cy="11" r="6" fill={N} /><path d="M9 16h6v5l-3 2-3-2z" fill={N} /><path d="M3 4l3 3M21 4l-3 3M1 10h3M23 10h-3" stroke={L} strokeWidth="2" /></svg>
          构件显隐
        </QuickButton>
      </QuickRow>
      <QuickRow $gap={8}>
        <QuickButton $w={125}><ColorBall /><span>颜色渲染</span><Caret /></QuickButton>
        <QuickButton $w={125}>
          <svg width="24" height="24" viewBox="0 0 24 24"><path d="M5 5h14v14H5z" fill="#e2a055" /><path d="M2 2h9v10H2zM13 13h9v10h-9z" fill="#e2ebf6" stroke="#93a6c4" /></svg>
          <span>材质渲染</span><Caret />
        </QuickButton>
      </QuickRow>
      <QuickRow>
        <QuickButton $w={75} $off disabled>
          <svg width="24" height="24" viewBox="0 0 24 24" fill="#64689a"><path d="M12 2l7 12h-4v4H9v-4H5z" /><path d="M5 20h14v2H5z" /></svg>
          上层
        </QuickButton>
        <QuickButton $w={26} $pad={1} aria-label="设置"><GearShape size={22} fill="#3f86cc" hole="#484848" /></QuickButton>
        <QuickButton $w={75}>
          <svg width="22" height="22" viewBox="0 0 22 22"><path d="M0 0h22v22H0z" fill="#e8f1fa" /><path d="M0 0h22v4H0z" fill="#5aa6e0" /><path d="M9 7h4v6h4l-6 7-6-7h4z" fill="#8cc0ea" stroke="#2e76b4" /></svg>
          下层
        </QuickButton>
        <QuickButton $w={32} $pad={3} $last aria-label="图纸">
          <svg width="24" height="24" viewBox="0 0 24 24"><path d="M0 0h24v24H0z" fill="#fff" /><path d="M6 1h14v19l-3 3" fill="#2b76d8" stroke={N} /><path d="M4 3h12v20H6l-2-2z" fill={L} stroke="#2b62b0" /><path d="M6 7h8M6 11h8M6 15h8" stroke="#fff" strokeWidth="1.500" /></svg>
        </QuickButton>
      </QuickRow>
    </QuickArea>
  </TopArea>
);

const SidePanel = () => (
  <Side>
    <SideHeader>
      <svg width="4" height="11" viewBox="0 0 4 11" stroke="#333"><path d="M.5 0v11M3.500 0v11" strokeDasharray="1 1" /></svg>
      视图控制面板
    </SideHeader>
    <SearchRow>
      <SelectBox $h={28}>
        <select aria-label="搜索楼层/视图"><option>搜索楼层/视图</option></select>
        <Caret />
      </SelectBox>
      <CheckLabel><Check defaultChecked />单选模式</CheckLabel>
    </SearchRow>
    <Tree>
      {TREE.map((row, i) => (
        <TreeRow key={i} $selected={row.selected}>
          {row.guides.map((line, g) => {
            const last = g === row.guides.length - 1;
            return (
              <Guide key={g} $line={line} $stub={last}>
                {last && row.open && <svg width="6" height="6" viewBox="0 0 6 6"><path d="M6 0v6H0z" fill="#eee" /></svg>}
              </Guide>
            );
          })}
          <Check $tone={row.tone} defaultChecked={row.checked} aria-label={row.text} />
          <TreeIcon>{TREE_ART[row.art]}</TreeIcon>
          {row.text}
        </TreeRow>
      ))}
    </Tree>
    <SideFooter>
      <Tools />
      <SplitButton $w={190} $arrow={28}>
        <button><Ring />视觉样式</button>
        <button aria-label="视觉样式选项"><Caret /></button>
      </SplitButton>
      <SplitButton $w={178} $arrow={37}>
        <button><Album />底图管理</button>
        <button aria-label="底图管理选项"><Caret /></button>
      </SplitButton>
    </SideFooter>
  </Side>
);

const WorkArea = () => (
  <Work>
    <Canvas>
      <ViewLabel>[−][俯视][二维线框]</ViewLabel>
      <WindowButtons>
        <button aria-label="最小化"><svg width="12" height="12" viewBox="0 0 12 12"><path d="M1 8h10v3H1z" fill="#f4f4f4" /></svg></button>
        <button aria-label="还原"><svg width="12" height="12" viewBox="0 0 12 12" fill="none" stroke="#f4f4f4"><path d="M2 4.500h6v6H2z" strokeWidth="2" /><path d="M4 1.500h7v7" /></svg></button>
        <button aria-label="关闭"><svg width="12" height="12" viewBox="0 0 12 12"><path d="M2 2l8 8M10 2l-8 8" stroke="#f4f4f4" strokeWidth="2.500" /></svg></button>
      </WindowButtons>
      <Compass>
        <svg width="132" height="134" viewBox="0 0 132 134" fontSize="18" fill="#b6b6b8" textAnchor="middle">
          <circle cx="66" cy="66" r="53" fill="none" stroke="#434a53" strokeWidth="13" />
          <circle cx="66" cy="66" r="60" fill="none" stroke="#39393a" />
          <circle cx="66" cy="66" r="47" fill="none" stroke="#39393a" />
          <rect x="40.500" y="40.500" width="51" height="51" fill="#b3b4b6" stroke="#7c7c7c" />
          <rect x="50" y="50" width="32" height="32" fill="#a2a8ae" />
          <text x="66" y="77" fontSize="30" fill="#5b5e68">上</text>
          <text x="66" y="18">北</text>
          <text x="9" y="74">西</text>
          <text x="122" y="74">东</text>
          <text x="66" y="131">南</text>
        </svg>
        <WcsButton>WCS<svg width="8" height="5" viewBox="0 0 8 5"><path d="M0 0h8L4 5z" fill="#c9cabf" stroke="#777" strokeWidth=".5" /></svg></WcsButton>
      </Compass>
      <Drawing $x={228} $y={400} width="136" height="140" viewBox="0 0 136 140" fill="none">
        <path d="M9.500 77V27M6 33l3.500-6 4 6M10 5l5 7 4-7M14.500 12v6" stroke="#050d05" />
        <path d="M9.500 77v50.500H60M5.500 122.500h9v9h-9zM12 60l6.500 6.500L25 60M18.500 66v7M64 113l13 13M77 113l-13 13" stroke="#fff" />
        <path d="M60 127.500h50M104 123l6 4.500-6 4.500" stroke="#c81e1e" />
        <path d="M119 115l9 13M128 115l-9 13" stroke="#c81e1e" strokeWidth="2" />
      </Drawing>
      <Drawing $x={633} $y={504} width="98" height="98" viewBox="0 0 98 98" fill="none" stroke="#fff">
        <path d="M48.500 0v45M48.500 52v45M0 48.500h45M52 48.500h45M45.500 45.500h6v6h-6z" />
      </Drawing>
      <Caption>当前视图：体系0_2层 视图_2层<br />当前楼层：体系0_标准层2_【2层】H=3.000m</Caption>
    </Canvas>
    <CommandDock>
      <DockHandle>
        <svg width="17" height="5" viewBox="0 0 17 5" stroke="#aaa"><path d="M0 .5h17M0 2.500h17M0 4.500h17" strokeDasharray="1 1" /></svg>
        <svg width="10" height="10" viewBox="0 0 10 10"><path d="M1 1l8 8M9 1L1 9" stroke="#eee" strokeWidth="2" /></svg>
        <svg width="14" height="14" viewBox="0 0 14 14"><path d="M5 5l7 7" stroke="#eee" strokeWidth="3" /><path d="M4 1a4 4 0 1 1-3 3l3 1 1-1z" fill="#eee" /></svg>
      </DockHandle>
      <DockBody>
        <History>命令:</History>
        <Prompt>
          <svg width="15" height="13" viewBox="0 0 15 13"><rect x=".5" y=".5" width="14" height="12" rx="1" fill="#e4e4e4" stroke="#999" /><path d="M3 4l3 2.500L3 9M8 10h4" stroke="#333" fill="none" /></svg>
          <Caret w={6} c="#777" />
          <input placeholder="键入命令" aria-label="键入命令" />
        </Prompt>
      </DockBody>
    </CommandDock>
  </Work>
);

const Footer = () => (
  <BottomLine>
    <LayoutTabs>
      <LayoutTab $active>模型</LayoutTab>
      <LayoutTab>布局1</LayoutTab>
      <LayoutTab>布局2</LayoutTab>
      <AddTab aria-label="新建布局"><Plus /></AddTab>
    </LayoutTabs>
    <Status>
      <Cell $w={210} $start={17}>257103.4909, -13028.3991, 0.0000</Cell>
      {STATUS.map((c, i) =>
        c.select ? (
          <SelectBox key={i} $w={c.w} $h={26}>
            <select aria-label="单位"><option>{c.select}</option></select>
            <Caret />
          </SelectBox>
        ) : (
          <Cell key={i} $w={c.w} $edge={c.edge} $bold={c.text === "模型"}>{c.text || c.art}</Cell>
        )
      )}
    </Status>
  </BottomLine>
);

export default function App() {
  return (
    <>
      <GlobalStyle />
      <Shell>
        <Header />
        <DocTabs>
          <DocTab $w={128} $pad={15}>开始</DocTab>
          <DocTab $w={122} $pad={11}>工程集</DocTab>
          <DocTab $w={126} $pad={10} $active>
            新建图纸*
            <svg width="8" height="8" viewBox="0 0 8 8"><path d="M1 1l6 6M7 1L1 7" stroke="#3c3c3c" strokeWidth="2" /></svg>
          </DocTab>
          <AddTab aria-label="新建图纸"><Plus /></AddTab>
        </DocTabs>
        <Toolbar>
          {LEFT_BUTTONS.map(([text, w, on]) => (
            <ToolbarButton key={text} $w={w} $on={on}>{text}</ToolbarButton>
          ))}
          <OrderGroup>
            <OrderButton><OrderIcon />前置</OrderButton>
            <OrderButton><OrderIcon low />后置</OrderButton>
          </OrderGroup>
          {RIGHT_BUTTONS.map(([text, w]) => (
            <ToolbarButton key={text} $w={w}>{text}</ToolbarButton>
          ))}
          <CheckLabel $push><Check defaultChecked />Top</CheckLabel>
        </Toolbar>
        <Body>
          <SidePanel />
          <WorkArea />
        </Body>
        <Footer />
      </Shell>
    </>
  );
}
